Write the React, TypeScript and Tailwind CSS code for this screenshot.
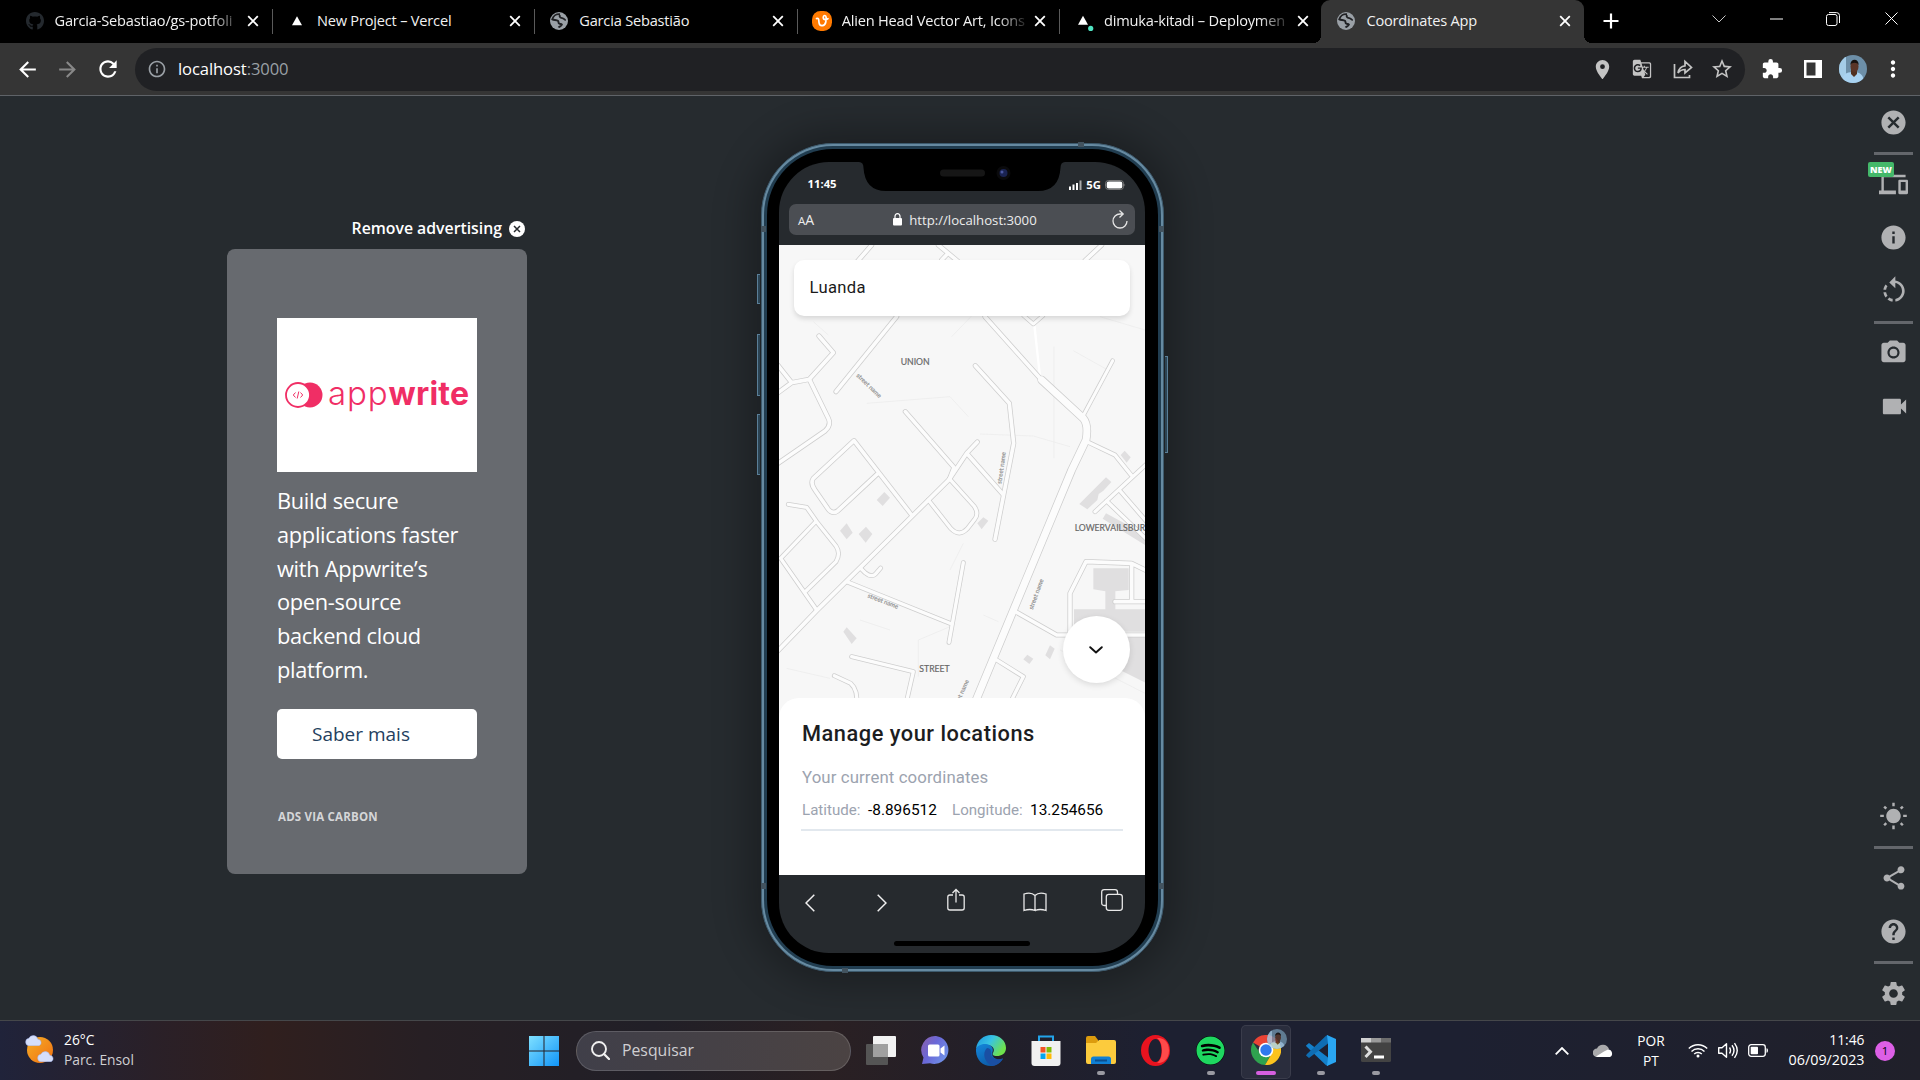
import React from "react";
import {
  MdArrowBack, MdArrowForward, MdRefresh, MdInfoOutline, MdLocationOn, MdGTranslate, MdStarBorder,
  MdExtension, MdMoreVert, MdCancel, MdDevices, MdInfo, MdRotateLeft, MdPhotoCamera, MdVideocam,
  MdWbSunny, MdShare, MdHelp, MdSettings,
} from "react-icons/md";
import { FaGithub, FaSpotify } from "react-icons/fa";

const ui = "font-['Open_Sans',sans-serif]";
const app = "font-['Roboto',sans-serif]";

function Close() {
  return (
    <svg width="12" height="12" viewBox="0 0 12 12" stroke="#fff" strokeWidth="1.8">
      <path d="M1.2 1.2 10.8 10.8M10.8 1.2 1.2 10.8" />
    </svg>
  );
}

function Globe() {
  return (
    <svg width="18" height="18" viewBox="0 0 18 18">
      <circle cx="9" cy="9" r="9" fill="#9aa0a6" />
      <path d="M10 2.200C6.500 1.800 3.300 3.800 2.300 7.300c1.800.9 4.200.4 5.600 1.500 1.200 1.100-.1 2.300 1.400 2.900 1 .4 2 .1 2.600.9-.5 1.700-2.400 1.500-3.400 2.900" fill="none" stroke="#202124" strokeWidth="1.900" />
      <path d="M10 2.800c-1.200 1.800.3 3 2.200 3.300 1.900.3 2 1.800 3.600 2" fill="none" stroke="#202124" strokeWidth="1.900" />
    </svg>
  );
}

function Triangle() {
  return (
    <svg width="18" height="18" viewBox="0 0 18 18">
      <path d="M9 4.200 14 13.200H4Z" fill="#fff" />
    </svg>
  );
}

function Person({ size }: { size: number }) {
  return (
    <svg width={size} height={size} viewBox="0 0 28 28">
      <defs>
        <clipPath id={"pc" + size}><circle cx="14" cy="14" r="14" /></clipPath>
      </defs>
      <g clipPath={`url(#pc${size})`}>
        <rect width="28" height="28" fill="#6d8fa8" />
        <rect width="7" height="28" fill="#a5cde8" />
        <path d="M3 28c0-8 4-11 11-11s11 3 11 11Z" fill="#a9d2f0" />
        <path d="M12 14h6v5l-3 3-3-3Z" fill="#51301f" />
        <ellipse cx="15.500" cy="11.500" rx="4" ry="5.500" fill="#5a3527" />
        <path d="M11.300 10c0-7 8.500-7 8.400 0-1.500-3-6.900-3-8.400 0Z" fill="#17120f" />
      </g>
    </svg>
  );
}

type TabProps = { icon: React.ReactNode; title: string; fade?: boolean; sep?: boolean; active?: boolean };

function Tab({ icon, title, fade, sep, active }: TabProps) {
  return (
    <div
      className={
        "relative flex h-[43px] w-[262.400px] shrink-0 items-center pb-px pl-4 " +
        (active ? "rounded-t-[9px] bg-[#353535]" : "")
      }
    >
      <span className="flex w-[18px] shrink-0 justify-center">{icon}</span>
      <span
        className={
          "-mt-[2px] ml-[11px] w-[184px] whitespace-nowrap text-[14.600px] leading-5 tracking-[-0.200px] text-[#f1f1f1] " +
          (fade ? "[mask-image:linear-gradient(to_right,#000_155px,transparent_188px)]" : "")
        }
      >
        {title}
      </span>
      <span className="ml-[8.500px]"><Close /></span>
      {sep && <span className="absolute right-[-1px] top-[9px] h-[25px] w-px bg-[#5a5a5a]" />}
    </div>
  );
}

function TabBar() {
  return (
    <div className="flex h-[43px] bg-black pl-[9.500px]">
      <Tab icon={<FaGithub size={20} color="#24292e" />} title="Garcia-Sebastiao/gs-potfoli" fade sep />
      <Tab icon={<Triangle />} title="New Project – Vercel" sep />
      <Tab icon={<Globe />} title="Garcia Sebastião" sep />
      <Tab
        icon={
          <svg width="20" height="20" viewBox="0 0 20 20" className="shrink-0">
            <rect width="20" height="20" rx="8.500" fill="#ff7a00" />
            <path d="M4.500 7.500c2.500-1 2.200 1.500 2.500 4 .4 4.500 6 4 6.800-.5.6-3.600.6-6.500-1-6.500-2 0-2.300 4 .5 4.200 1.200 0 2-.4 2.700-1" fill="none" stroke="#fff" strokeWidth="1.700" strokeLinecap="round" />
          </svg>
        }
        title="Alien Head Vector Art, Icons"
        fade
        sep
      />
      <Tab
        icon={
          <svg width="20" height="20" viewBox="0 0 20 20" className="shrink-0">
            <path d="M9 4.800 14 13.800H4Z" fill="#fff" />
            <circle cx="16.700" cy="17.400" r="2.600" fill="#50e3c2" />
          </svg>
        }
        title="dimuka-kitadi – Deploymen"
        fade
      />
      <div className="relative">
        <span className="absolute -left-[8px] bottom-0 size-2 bg-[radial-gradient(circle_at_0_0,#000_8px,#353535_8px)]" />
        <Tab icon={<Globe />} title="Coordinates App" active />
        <span className="absolute -right-[8px] bottom-0 size-2 bg-[radial-gradient(circle_at_100%_0,#000_8px,#353535_8px)]" />
      </div>
      <svg width="16" height="16" viewBox="0 0 16 16" stroke="#fff" strokeWidth="2.200" className="ml-[19.500px] mt-[13px]">
        <path d="M8 .5v15M.5 8h15" />
      </svg>
      <div className="ml-auto flex h-[37px] items-center pr-[22px]">
        <svg width="14" height="8" viewBox="0 0 14 8" fill="none" stroke="#c8c8c8"><path d="M.5.5 7 7 13.500.5" /></svg>
        <svg width="13" height="2" viewBox="0 0 13 2" className="ml-[44px]"><path d="M0 1h13" stroke="#fff" /></svg>
        <svg width="14" height="14" viewBox="0 0 14 14" fill="none" stroke="#fff" className="ml-[43px]">
          <rect x=".5" y="2.500" width="10.500" height="11" rx="2" />
          <path d="M3 .6h7.500q3 0 3 3V11" />
        </svg>
        <svg width="13" height="13" viewBox="0 0 13 13" stroke="#fff" className="ml-[45px]"><path d="M.5.5l12 12M12.500.5l-12 12" /></svg>
      </div>
    </div>
  );
}

function Toolbar() {
  return (
    <div className="flex h-[53px] items-center border-b border-[#5f6368] bg-[#353535] pl-[15px]">
      <MdArrowBack size={25} color="#fff" />
      <MdArrowForward size={25} color="#888" className="ml-[15px]" />
      <MdRefresh size={26} color="#fff" className="ml-[15px]" />
      <div className="ml-[14px] flex h-[43px] w-[1610px] items-center rounded-full bg-[#202124] pl-3">
        <MdInfoOutline size={20} color="#9aa0a6" />
        <span className="ml-[11px] text-[16.600px] tracking-[-0.100px] text-white">
          localhost<span className="text-[#9aa0a6]">:3000</span>
        </span>
        <div className="ml-auto flex items-center pr-[11px] text-[#c4c4c4]">
          <MdLocationOn size={23} />
          <MdGTranslate size={20} className="ml-[18px]" />
          <svg width="20" height="20" viewBox="0 0 20 20" fill="none" stroke="#c4c4c4" strokeWidth="1.700" className="ml-[21px]">
            <path d="M1.500 5v13.500H16.500V16" />
            <path d="M5 14C6 9 8.500 7 12 6.800V2.500L18.500 8.500 12 14V10.500C9 10.500 7 11.500 5 14Z" />
          </svg>
          <MdStarBorder size={24} className="ml-[17px]" />
        </div>
      </div>
      <MdExtension size={22} color="#fff" className="ml-[16px]" />
      <svg width="18" height="18" viewBox="0 0 18 18" className="ml-[20.500px]">
        <path fillRule="evenodd" d="M0 0h18v18H0ZM2.500 2.500v13h9v-13Z" fill="#fff" />
      </svg>
      <span className="ml-[17px]"><Person size={28} /></span>
      <MdMoreVert size={26} color="#fff" className="ml-[13px]" />
    </div>
  );
}

function Ad() {
  return (
    <aside className="ml-[227px] mt-[122px] w-[300px] shrink-0">
      <div className="flex h-[31px] items-start justify-end pr-[2px]">
        <span className="whitespace-nowrap text-[15.800px] font-semibold leading-[20px] text-white">Remove advertising</span>
        <svg width="16" height="16" viewBox="0 0 16 16" className="ml-[7px] mt-[3px]">
          <circle cx="8" cy="8" r="8" fill="#fff" />
          <path d="M5 5l6 6M11 5l-6 6" stroke="#25292d" strokeWidth="1.500" />
        </svg>
      </div>
      <div className="h-[625px] rounded-[8px] bg-[#676a6f] px-[50px] pt-[69px]">
        <div className="flex h-[154px] w-[200px] items-center bg-white pl-2">
          <svg width="38" height="26" viewBox="0 0 38 26">
            <circle cx="25" cy="13" r="12.500" fill="#f02e65" />
            <circle cx="13" cy="13" r="12" fill="#fff" stroke="#f02e65" strokeWidth="1.800" />
            <path d="M10.500 10.500 8.300 13l2.200 2.500M15.500 10.500l2.200 2.500-2.200 2.500M13.800 9.500l-1.600 7" fill="none" stroke="#f02e65" strokeWidth="1" />
          </svg>
          <span className="-mt-[4px] ml-[5px] flex items-baseline whitespace-nowrap font-['Inter',sans-serif] leading-none text-[#f02e65]">
            <span className="text-[33px] font-light tracking-[0.900px]">app</span>
            <span className="text-[32px] font-bold tracking-[0.200px]">write</span>
          </span>
        </div>
        <p className="mt-[12px] w-[200px] text-[21.800px] leading-[33.800px] tracking-[-0.300px] text-white">
          Build secure applications faster with Appwrite’s open-source backend cloud platform.
        </p>
        <div className="mt-[22px] flex h-[50px] w-[200px] items-center rounded-[5px] bg-white pl-[35px] text-[19px] text-[#24405e]">
          Saber mais
        </div>
        <div className="mt-[48px] pl-px text-[11.500px] font-bold leading-[20px] tracking-[0.200px] text-[#d5d6d8]">ADS VIA CARBON</div>
      </div>
    </aside>
  );
}

const roads: [string, number][] = [
  ["M365 345 300 420", 14],
  ["M440 560 258 785", 14],
  ["M565 345 625 395M592 372 575 390", 14],
  ["M1055 345 1005 392", 14],
  ["M207 618 250 668 178 748 125 758 84 706M125 758 84 788", 14],
  ["M178 748 235 865Q245 885 225 903L84 1000", 14],
  ["M466 845 612 1012 598 1048", 14],
  ["M676 707 778 820 791 940 735 1228", 14],
  ["M705 560 870 745", 14],
  ["M820 556 850 582 880 556", 12],
  ["M1088 692 998 860", 12],
  ["M1011 935 1095 975 1145 1037M1190 1002 1035 1145", 13],
  ["M485 1155 312 932 190 1045Q180 1060 195 1080L235 1138Q248 1154 264 1142L382 1032", 14],
  ["M682 936 650 970 758 1092M650 970 598 1048", 14],
  ["M598 1048 200 1442 84 1562", 14],
  ["M535 1110 603 1196Q628 1222 652 1196L674 1168Q688 1150 672 1128L600 1048", 13],
  ["M115 1123 170 1132 200 1175 258 1248Q273 1270 258 1295L165 1386M198 1174 92 1285 200 1440", 13],
  ["M332 1315 345 1328Q367 1346 380 1328L392 1314", 13],
  ["M290 1355 605 1482M640 1298 597 1537", 13],
  ["M305 1580 490 1625 466 1730", 13],
  ["M253 1637 302 1660Q325 1680 320 1730", 13],
  ["M800 1447 920 1515 960 1515 960 1390 1008 1295 1145 1300 1190 1322M1145 1302V1410M1095 1415H1190M960 1515H1190", 14],
  ["M740 1590 820 1640 775 1730", 13],
  ["M1070 1113 1190 1228M1108 1080 1190 1175", 13],
  ["M875 750 1000 865Q1016 885 1008 930L965 1020 670 1730", 24],
];

const lots = [
  "M380 1110 403 1086 420 1103 398 1128Z", "M290 1180 308 1208 290 1228 270 1202Z",
  "M348 1190 367 1212 347 1238 326 1212Z", "M280 1505 290 1492 320 1525 305 1542Z",
  "M682 1180 700 1162 715 1172 695 1198Z", "M988 1122 1068 1042 1084 1056 1060 1082 1046 1092 1042 1110 1012 1138Z",
  "M1058 1166 1068 1150 1190 1216V1248Z", "M1030 1315H1136V1380L1096 1384V1438H1190V1505H972V1438H1066V1384L1030 1378Z",
  "M1100 1520H1190V1660L1110 1620Z", "M820 1588 832 1574 850 1586 838 1602Z", "M886 1576 900 1546 914 1556 900 1588Z",
  "M1112 975 1124 962 1142 982 1130 998Z",
];

const labels: [string, number, number, number, number][] = [
  ["UNION", 452, 705, 26, 0], ["STREET", 508, 1627, 26, 0], ["LOWERVAILSBUR", 974, 1203, 26, 0],
  ["street name", 318, 738, 18.500, 44], ["street name", 754, 1062, 18.500, -82], ["street name", 352, 1402, 18.500, 21],
  ["street name", 848, 1440, 18.500, -70], ["street name", 618, 1740, 18.500, -66],
];

function StreetMap() {
  return (
    <svg width="366" height="473" viewBox="87 345 1098 1419" preserveAspectRatio="none" className="block bg-[#f7f7f7]">
      {lots.map((d) => <path key={d} d={d} fill="#e0dfe0" />)}
      <path d="M853 585 870 740" stroke="#fff" strokeWidth="7" />
      <path d="M350 820 600 800 655 860M690 912 850 918 960 950M912 650V985M605 620 730 490M970 662 1070 718M1050 560 1185 600M190 575 235 615M640 1240 600 1320M330 1470 420 1500M505 1640V1530L600 1490M700 1455 745 1475M110 1615 240 1645M930 1560 1185 1690" fill="none" stroke="#ededed" strokeWidth="2.500" />
      <g fill="none" stroke="#cecece" strokeLinejoin="round" strokeLinecap="round">
        {roads.map(([d, w]) => <path key={d} d={d} strokeWidth={w + 1.5} />)}
      </g>
      <g fill="none" stroke="#fcfcfc" strokeLinejoin="round" strokeLinecap="round">
        {roads.map(([d, w]) => <path key={d} d={d} strokeWidth={w - 3} />)}
      </g>
      <g fontFamily="Lato, sans-serif">
        {labels.map(([t, x, y, s, r], i) => (
          <text key={i} x={x} y={y} fontSize={s} fill={s > 20 ? "#666" : "#858585"} stroke={s > 20 ? "#666" : "#999"} strokeWidth=".5" transform={`rotate(${r} ${x} ${y})`}>{t}</text>
        ))}
      </g>
    </svg>
  );
}

function Phone() {
  return (
    <div className="relative ml-[234px] mt-[47px] h-[829px] w-[403px] shrink-0 rounded-[72px] shadow-[0_0_36px_12px_rgba(0,0,0,0.28)]">
      <span className="absolute left-[-4px] top-[131px] h-[30px] w-[3px] border border-r-0 border-[#5a7f98] bg-[#2c4454]" />
      <span className="absolute left-[-4px] top-[191px] h-[62px] w-[3px] border border-r-0 border-[#5a7f98] bg-[#2c4454]" />
      <span className="absolute left-[-4px] top-[271px] h-[61px] w-[3px] border border-r-0 border-[#5a7f98] bg-[#2c4454]" />
      <span className="absolute right-[-4px] top-[213px] h-[97px] w-[3px] border border-l-0 border-[#5a7f98] bg-[#2c4454]" />
      <div className="h-full rounded-[72px] border border-[#3d5a6d] bg-[#668aa1] p-[2px]">
        <div className="h-full rounded-[69px] bg-[#213d50] p-[3px]">
          <div className="h-full rounded-[66px] bg-black px-[12px] py-[13px]">
            <div className="flex h-[791px] w-[366px] flex-col overflow-hidden rounded-[50px] bg-[#262a2e]">
              <div className="flex h-[42px] justify-between">
                <span className="ml-[28.500px] mt-[14px] w-[30px] text-[11.300px] font-bold leading-4 text-white">11:45</span>
                <svg width="206" height="29" viewBox="0 0 206 29" className="ml-[18px] shrink-0">
                  <path d="M0 0Q4.500 0 4.500 6 6 29 27 29H179Q200 29 201.500 6 201.500 0 206 0Z" fill="#000" />
                  <rect x="81" y="7.500" width="45" height="7" rx="3.500" fill="#161616" />
                  <circle cx="144.500" cy="11" r="7" fill="#0a0a0c" />
                  <circle cx="144.500" cy="11" r="4" fill="#1a2352" />
                  <circle cx="143" cy="10" r="1.500" fill="#4a57a0" />
                </svg>
                <div className="mr-[19px] mt-[14px] flex h-[18px] items-center">
                  <svg width="13" height="10" viewBox="0 0 13 10" fill="#fff"><path d="M0 6.500h2V10H0ZM3.500 4.500h2V10h-2ZM7 3h2v7H7Z" /><path d="M10.500.5h2V10h-2Z" fill="#aaa" /></svg>
                  <span className="ml-[4px] text-[11.300px] font-bold text-white">5G</span>
                  <svg width="21" height="10" viewBox="0 0 21 10" className="ml-[4px]">
                    <rect x=".5" y=".5" width="18" height="9" rx="3" fill="none" stroke="#777" />
                    <rect x="1.700" y="1.500" width="15.600" height="7" rx="2" fill="#fff" />
                    <path d="M19.500 3.500q1.400 1.500 0 3Z" fill="#888" />
                  </svg>
                </div>
              </div>
              <div className="mx-[10px] flex h-[31px] items-center rounded-[7px] bg-[#4b4e53] px-[9px] text-[#ececec]">
                <span className="-mt-px leading-none"><span className="text-[11.500px]">A</span><span className="text-[14px]">A</span></span>
                <svg width="9" height="13" viewBox="0 0 9 13" className="ml-[79px]">
                  <rect y="5" width="9" height="7.500" rx="1" fill="#fff" />
                  <path d="M2 5.500V3.200a2.500 2.500 0 0 1 5 0v2.300" fill="none" stroke="#fff" strokeWidth="1.200" />
                </svg>
                <span className="ml-[7px] mt-[2px] text-[13.200px]">http://localhost:3000</span>
                <svg width="16" height="19" viewBox="0 0 16 19" fill="none" stroke="#e4e4e4" strokeWidth="1.300" className="-mr-[2px] -mt-px ml-auto">
                  <path d="M15 11A7 7 0 1 1 8 4h2.500M7.500.5 11.200 4 7.500 7.500" />
                </svg>
              </div>
              <div className="relative mt-[10px] h-[630px] shrink-0 bg-white">
                <StreetMap />
                <div className={app + " absolute left-[15px] top-[15px] flex h-[56px] w-[336px] items-center rounded-[10px] bg-white pl-[15.500px] text-[16.600px] tracking-[0.350px] text-[#1a1a1a] shadow-[0_3px_5px_rgba(0,0,0,0.12)]"}>
                  Luanda
                </div>
                <div className="absolute right-[15px] top-[371px] flex size-[67px] items-center justify-center rounded-full bg-white pr-px shadow-[0_2px_6px_rgba(0,0,0,0.12)]">
                  <svg width="14" height="8" viewBox="0 0 14 8" fill="none" stroke="#111" strokeWidth="1.900" strokeLinecap="round" strokeLinejoin="round"><path d="M1.200 1.200 7 6.500 12.800 1.200" /></svg>
                </div>
                <div className={app + " relative -mt-[20px] h-[177px] rounded-t-[20px] bg-white px-[22px] pt-[23px]"}>
                  <h1 className="pl-px text-[21.800px] font-medium leading-[26px] tracking-[0.520px] text-[#1c1d1f]">Manage your locations</h1>
                  <p className="mt-[19px] pl-px text-[16.800px] leading-[22px] tracking-[0.110px] text-[#9ca3af]">Your current coordinates</p>
                  <div className="mt-[12px] flex items-baseline whitespace-nowrap pl-[1px] text-[15.100px] leading-[20px] text-black">
                    <span className="w-[66px] text-[#9ca3af]">Latitude:</span>
                    <span className="w-[84px] text-[15.400px]">-8.896512</span>
                    <span className="w-[78px] text-[#9ca3af]">Longitude:</span>
                    <span className="text-[15.400px]">13.254656</span>
                  </div>
                  <div className="mt-[9px] h-[2px] w-[322px] bg-[#e2e8ee]" />
                </div>
              </div>
              <div className="flex items-start pl-[26px] pt-[14px]">
                <svg width="10" height="18" viewBox="0 0 10 18" fill="none" stroke="#f0f0f0" strokeWidth="1.500" className="mt-[5px]"><path d="M9.300.7 1 9l8.300 8.300" /></svg>
                <svg width="10" height="18" viewBox="0 0 10 18" fill="none" stroke="#f0f0f0" strokeWidth="1.500" className="ml-[62px] mt-[5px]"><path d="M.7.7 9 9 .7 17.300" /></svg>
                <svg width="18" height="23" viewBox="0 0 18 23" fill="none" stroke="#e8e8e8" strokeWidth="1.300" className="-mt-px ml-[60px]">
                  <path d="M6 7H3Q.8 7 .8 9v11q0 2 2.200 2h12q2.200 0 2.200-2V9q0-2-2.200-2h-3M9 14.500V1.500M5.500 5 9 1.500 12.500 5" />
                </svg>
                <svg width="24" height="20" viewBox="0 0 24 20" fill="none" stroke="#e8e8e8" strokeWidth="1.300" className="ml-[57.500px] mt-[3px]">
                  <path d="M12 3.500Q8-.5 1 2v16.500q6-2 11 0V3.500Q16-.5 23 2v16.500q-6-2-11 0" />
                </svg>
                <svg width="22" height="22" viewBox="0 0 22 22" fill="none" stroke="#e8e8e8" strokeWidth="1.300" className="ml-[54.500px]">
                  <rect x="5.300" y="5.300" width="16" height="16" rx="2.500" />
                  <path d="M5 16.500H3.200Q.7 16.500.7 14V3.200Q.7.700 3.200.700H14q2.500 0 2.500 2.500V5" />
                </svg>
              </div>
              <div className="mx-auto mt-[29px] h-[5px] w-[136px] rounded-full bg-black" />
            </div>
          </div>
        </div>
      </div>
      <span className="absolute left-0 top-[83px] h-[6px] w-[5px] bg-[#42535f]" />
      <span className="absolute right-0 top-[83px] h-[6px] w-[5px] bg-[#42535f]" />
      <span className="absolute left-0 top-[740px] h-[6px] w-[5px] bg-[#42535f]" />
      <span className="absolute right-0 top-[740px] h-[6px] w-[5px] bg-[#42535f]" />
      <span className="absolute left-[317px] top-[-1px] h-[5px] w-[6px] bg-[#42535f]" />
      <span className="absolute bottom-[-1px] left-[81px] h-[5px] w-[6px] bg-[#42535f]" />
    </div>
  );
}

function Rule({ className }: { className: string }) {
  return <span className={"h-[3px] w-[39px] shrink-0 bg-[#63666b] " + className} />;
}

function SideTools() {
  return (
    <nav className="ml-auto mr-[7px] flex w-[39px] flex-col items-center text-[#b0b1b3]">
      <MdCancel size={29} className="mt-[12px]" />
      <Rule className="mt-[15px]" />
      <div className="relative mt-[15px]">
        <MdDevices size={29} />
        <span className="absolute -left-[11px] -top-[8px] flex h-[15px] w-[26px] items-center justify-center rounded-[2px] bg-[#44b86a] text-[9px] font-extrabold text-white">NEW</span>
      </div>
      <MdInfo size={29} className="mt-[24px]" />
      <MdRotateLeft size={32} className="mt-[23px]" />
      <Rule className="mt-[14px]" />
      <MdPhotoCamera size={29} className="mt-[14px]" />
      <MdVideocam size={31} className="ml-px mt-[24px]" />
      <MdWbSunny size={29} className="mt-[380px]" />
      <Rule className="mt-[15px]" />
      <MdShare size={28} className="mt-[15px]" />
      <MdHelp size={29} className="mt-[25px]" />
      <Rule className="mt-[15px]" />
      <MdSettings size={29} className="mt-[15px]" />
    </nav>
  );
}

function Slot({ children, dot, active }: { children: React.ReactNode; dot?: boolean; active?: boolean }) {
  return (
    <div className="relative flex h-[59px] w-[55px] shrink-0 items-center justify-center pb-px">
      {active && <span className="absolute left-[2.500px] top-[4px] h-[54px] w-[50px] rounded-[5px] border border-white/8 bg-white/6" />}
      <span className="relative">{children}</span>
      {dot && <span className="absolute bottom-[5px] h-[4px] w-[8px] rounded-full bg-[#9a9aa2]" />}
      {active && <span className="absolute bottom-[5px] h-[4px] w-[20px] rounded-full bg-[#d65fe0]" />}
    </div>
  );
}

function Cloud({ className, w }: { className: string; w: number }) {
  return (
    <svg width={w} height={w * 0.62} viewBox="0 0 26 16" className={className}>
      <path d="M6 15.500a5.500 5.500 0 0 1-.5-10.900A7 7 0 0 1 18.500 6 5 5 0 0 1 20.500 15.500Z" fill="#d5defa" stroke="#9fb2ee" strokeWidth=".7" />
    </svg>
  );
}

function Taskbar() {
  return (
    <footer className="flex h-[60px] items-center border-t border-[#45474a] bg-[linear-gradient(90deg,#20233a_0%,#2a2028_8%,#301f1e_14%,#271f24_22%,#211f27_34%,#2a2023_43%,#221f29_52%,#1d2031_60%,#1d2031_76%,#20202a_100%)]">
      <div className="relative -mt-[3px] ml-[25px] size-[30px]">
        <span className="absolute left-[2px] top-[3px] size-[26px] rounded-full bg-linear-to-br from-[#f5ad25] to-[#ef6f12]" />
        <Cloud w={18} className="absolute left-0 top-[1px]" />
        <Cloud w={18} className="absolute bottom-[2px] right-0" />
      </div>
      <div className="-mt-[2px] ml-[9px] w-[100px] text-[13.800px] leading-[20px] text-white">
        <div>26°C</div>
        <div className="text-[#d0cfd2]">Parc. Ensol</div>
      </div>
      <svg width="30" height="30" viewBox="0 0 30 30" className="ml-[365px]">
        <defs>
          <linearGradient id="win" x1="0" y1="0" x2="30" y2="30" gradientUnits="userSpaceOnUse"><stop stopColor="#7fe0ff" /><stop offset="1" stopColor="#1195f8" /></linearGradient>
        </defs>
        <path d="M0 0h14.500v14.500H0ZM15.500 0H30v14.500H15.500ZM0 15.500h14.500V30H0ZM15.500 15.500H30V30H15.500Z" fill="url(#win)" />
      </svg>
      <div className="ml-[17px] flex h-[40px] w-[275px] items-center rounded-full border border-white/15 bg-[linear-gradient(90deg,#403f49,#4b4343)] pl-[13.500px]">
        <svg width="19" height="19" viewBox="0 0 19 19" fill="none" stroke="#f0f0f0" strokeWidth="1.900"><circle cx="8" cy="8" r="7" /><path d="M13 13l5 5" strokeLinecap="round" strokeWidth="2.300" /></svg>
        <span className="ml-[12.500px] text-[15.800px] text-[#cfced1]">Pesquisar</span>
      </div>
      <div className="ml-[2px] flex">
        <Slot>
          <svg width="30" height="29" viewBox="0 0 30 29"><rect x="7" y="0" width="23" height="21" rx="1" fill="#f2f2f2" /><rect x="0" y="8" width="22" height="21" rx="1" fill="#555" /><path d="M7 8h15v13H7Z" fill="#a0a0a0" /></svg>
        </Slot>
        <Slot>
          <svg width="30" height="30" viewBox="0 0 30 30">
            <defs><linearGradient id="chat" x1="0" y1="0" x2="1" y2=".6"><stop stopColor="#8d5fa8" /><stop offset=".5" stopColor="#6a68d8" /><stop offset="1" stopColor="#6f8fe6" /></linearGradient></defs>
            <path d="M15 1A14 14 0 1 1 9 28.200L1 29l1.500-6.500A14 14 0 0 1 15 1Z" fill="url(#chat)" />
            <rect x="7" y="9.500" width="11.500" height="12" rx="1.500" fill="#fff" /><path d="M19.500 13.500 23.500 10.500V20.500L19.500 17.500Z" fill="#fff" />
          </svg>
        </Slot>
        <Slot>
          <svg width="30" height="31" viewBox="0 0 30 31">
            <defs>
              <linearGradient id="e1" x1="0" y1="0" x2="1" y2=".5"><stop stopColor="#1b93df" /><stop offset=".5" stopColor="#38c3e4" /><stop offset="1" stopColor="#6fe24c" /></linearGradient>
              <linearGradient id="e2" x1="0" y1="0" x2=".6" y2="1"><stop stopColor="#1487dc" /><stop offset="1" stopColor="#0c59a4" /></linearGradient>
            </defs>
            <path d="M0 14C1 5 8 0 15 0c9 0 15 6 15 13 0 6-5 8-9 8-4 0-5-1.500-4-3 2.500-4-.5-8-6-8C5 10 1 12 0 14Z" fill="url(#e1)" />
            <path d="M0 14c1-3 5-5.500 10-5 5 .4 8 4 6.500 8-1.500 5 3.500 9 10.500 6.500C24 29 19 31 15 31 6 31-.5 24 0 14Z" fill="url(#e2)" />
            <path d="M11 13c-5 5-3 14 5 18 4-.3 8-2.500 11-7.500-6 2.500-12 0-12-5 0-3 0-5-4-5.500Z" fill="#1a4fa3" />
          </svg>
        </Slot>
        <Slot>
          <svg width="30" height="31" viewBox="0 0 30 31">
            <path d="M8 8V1.500H22V8" fill="none" stroke="#22a4ea" strokeWidth="2" />
            <path d="M.5 6h29v22q0 3-3 3h-23q-3 0-3-3Z" fill="#f1f1f1" />
            <path d="M9.500 12h5v5.500h-5Z" fill="#f35325" /><path d="M15.500 12h5v5.500h-5Z" fill="#81bc06" /><path d="M9.500 18.500h5V24h-5Z" fill="#05a6f0" /><path d="M15.500 18.500h5V24h-5Z" fill="#ffba08" />
          </svg>
        </Slot>
        <Slot dot>
          <svg width="30" height="29" viewBox="0 0 30 29">
            <path d="M0 2q0-2 2-2h7l3 4v5H0Z" fill="#dc9b0e" />
            <path d="M0 7h10l3-3h15q2 0 2 2v20q0 2-2 2H2q-2 0-2-2Z" fill="#fccb3d" />
            <path d="M5 28v-5q0-2.500 2.500-2.500h15q2.500 0 2.500 2.500v5Z" fill="#1080d4" /><path d="M9 23.500h12v2H9Z" fill="#0b4f8f" />
          </svg>
        </Slot>
        <Slot>
          <svg width="29" height="31" viewBox="0 0 29 31">
            <path fillRule="evenodd" d="M14.500 0A14.500 15.500 0 1 0 14.500 31 14.500 15.500 0 0 0 14.500 0ZM14.500 4C19 4 20.500 10 20.500 15.500S19 27 14.500 27 7.500 21 7.500 15.500 10 4 14.500 4Z" fill="#e8131f" />
            <path d="M16 3.500c3 1 5 6 5 12s-2 11-5 12c3 1.500 12-1 12-12S19 2 16 3.500Z" fill="#ff4a4a" />
          </svg>
        </Slot>
        <Slot dot>
          <span className="flex size-[29px] items-center justify-center rounded-full bg-black"><FaSpotify size={29} color="#1ed760" /></span>
        </Slot>
        <Slot active>
          <svg width="30" height="30" viewBox="0 0 30 30">
            <path d="M15 15 2 7.500A15 15 0 0 1 28 7.500L15 8Z" fill="#ea4335" />
            <path d="M2 7.500A15 15 0 0 0 14 30l6.500-11.500L15 15 9 18Z" fill="#2fa24f" />
            <path d="M28 7.500A15 15 0 0 1 14 30l7-12-1-10Z" fill="#fcc31e" />
            <circle cx="15" cy="15" r="7.300" fill="#fff" /><circle cx="15" cy="15" r="5.700" fill="#3079ee" />
          </svg>
          <span className="absolute -right-[6px] -top-[6px] opacity-80"><Person size={20} /></span>
        </Slot>
        <Slot dot>
          <svg width="30" height="31" viewBox="0 0 30 31">
            <path d="M0 10.500 3 8 22 22.500V31L20 30.300 1 12Q0 11 0 10.500Z" fill="#1480cb" />
            <path d="M0 20.500 3 23 22 8.500V0L20 .7 1 19Z" fill="#0f6db3" />
            <path d="M21 0 30 4V27L21 31 22 22.500V8.500Z" fill="#2aa6f2" />
          </svg>
        </Slot>
        <Slot dot>
          <svg width="30" height="24" viewBox="0 0 30 24">
            <rect width="30" height="24" rx="1.500" fill="#434343" /><path d="M0 0h10v4.500H0Z" fill="#d0d0d0" /><path d="M10 0h10v4.500H10Z" fill="#9a9a9a" /><path d="M20 0h10v4.500H20Z" fill="#6c6c6c" />
            <path d="M4.500 8.500 9.500 13.800 4.500 19" fill="none" stroke="#ddd" strokeWidth="3" /><path d="M13 17.500h10V20.500H13Z" fill="#fff" />
          </svg>
        </Slot>
      </div>
      <div className="ml-auto flex items-center pr-[25px] text-white">
        <svg width="14" height="8" viewBox="0 0 14 8" fill="none" stroke="#fff" strokeWidth="1.800"><path d="M.7 7.300 7 1l6.300 6.300" /></svg>
        <svg width="21" height="13" viewBox="0 0 21 13" className="ml-[24px]"><path d="M4 13a4 4 0 0 1 0-8.500A6.500 6.500 0 0 1 16 5l-6 8Z" fill="#a9a9ab" /><path d="M3 12.500 11 7.500 15 5.500A4 4 0 0 1 17 13H4Z" fill="#fff" /></svg>
        <div className="ml-[17px] w-[40px] text-center text-[13.700px] leading-[20px]"><div>POR</div><div>PT</div></div>
        <svg width="20" height="15" viewBox="0 0 20 15" fill="none" stroke="#fff" strokeWidth="1.400" className="ml-[17px]">
          <path d="M.8 5.500a13 13 0 0 1 18.400 0M3.500 8.400a9.200 9.200 0 0 1 13 0M6.200 11a5.400 5.400 0 0 1 7.600 0" /><circle cx="10" cy="13" r="1.500" fill="#fff" stroke="none" />
        </svg>
        <svg width="20" height="17" viewBox="0 0 20 17" fill="none" stroke="#fff" strokeWidth="1.400" className="ml-[10px]">
          <path d="M.7 5.800H4L8.500 1.800V15.200L4 11.200H.7Z" strokeLinejoin="round" /><path d="M11.500 5.500q2 3 0 6M14 3.300q4 5.200 0 10.400M16.500 1.200q5.500 7.300 0 14.600" />
        </svg>
        <svg width="20" height="13" viewBox="0 0 20 13" className="ml-[10px]"><rect x=".7" y=".7" width="16.600" height="11.600" rx="2.500" fill="none" stroke="#fff" strokeWidth="1.300" /><rect x="2.700" y="2.700" width="7.300" height="7.600" rx=".8" fill="#fff" /><path d="M18.500 4.300q1.500 0 1.500 2.200t-1.500 2.200Z" fill="#fff" /></svg>
        <div className="-mt-[2px] ml-[20px] w-[76.500px] text-right text-[14.300px] leading-[20px]"><div className="text-[13.800px]">11:46</div><div>06/09/2023</div></div>
        <span className="ml-[10.500px] flex size-[20px] items-center justify-center rounded-full bg-[#dc5fe6] text-[11.500px] text-black">1</span>
      </div>
    </footer>
  );
}

export default function App() {
  return (
    <div className={ui + " flex h-[1080px] w-[1920px] flex-col overflow-hidden bg-[#262b2f]"}>
      <TabBar />
      <Toolbar />
      <main className="flex h-[924px] shrink-0">
        <Ad />
        <Phone />
        <SideTools />
      </main>
      <Taskbar />
    </div>
  );
}
